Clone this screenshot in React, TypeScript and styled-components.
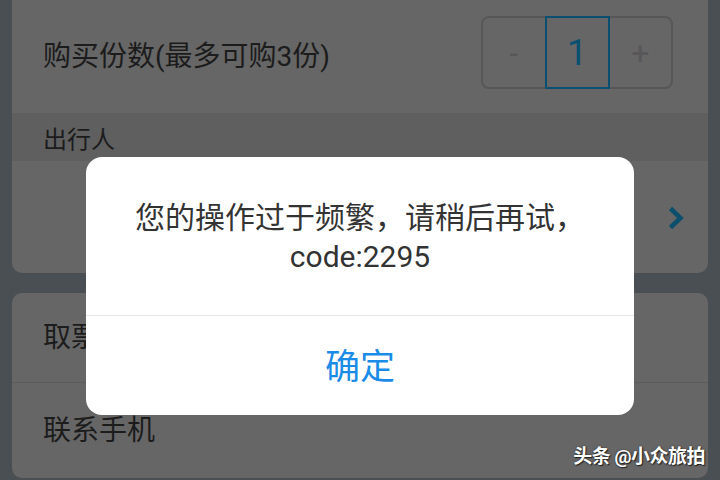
import React from "react";
import styled, { createGlobalStyle } from "styled-components";

const Global = createGlobalStyle`
  html, body { margin: 0; padding: 0; width: 720px; height: 480px; overflow: hidden; }
  body { background: #4a4f53; font-family: Roboto, "Noto Sans CJK SC", sans-serif; }
`;

const Page = styled.div`
  position: relative;
  width: 720px;
  height: 480px;
  overflow: hidden;
  background: #4a4f53;
  padding: 0 12px;
  box-sizing: border-box;
  display: flex;
  flex-direction: column;
  gap: 20px;
`;

const Card = styled.div<{ $top?: boolean }>`
  background: #666666;
  border-radius: ${(p) => (p.$top ? "0 0 10px 10px" : "10px")};
  display: flex;
  flex-direction: column;
  overflow: hidden;
  flex-shrink: 0;
`;

const Row = styled.div<{ $h: number; $divider?: boolean }>`
  height: ${(p) => p.$h}px;
  padding: 0 35px 0 31px;
  display: flex;
  align-items: center;
  justify-content: space-between;
  box-sizing: border-box;
  border-bottom: ${(p) => (p.$divider ? "1px solid #5c5c5c" : "none")};
`;

const Label = styled.span`
  font-size: 28px;
  color: #1c1c1c;
  line-height: 1;
`;

const SectionHeader = styled.div`
  height: 48px;
  background: #5f5f5f;
  padding: 0 31px;
  display: flex;
  align-items: center;
  font-size: 24px;
  color: #1c1c1c;
`;

const Stepper = styled.div`
  display: flex;
  width: 192px;
  height: 73px;
  border: 2px solid #575757;
  border-radius: 8px;
  box-sizing: border-box;
  margin-top: -8px;
`;

const StepBtn = styled.div`
  flex: 1;
  display: flex;
  align-items: center;
  justify-content: center;
  font-size: 32px;
  color: #575757;
`;

const StepValue = styled.div`
  width: 65px;
  margin: -2px 0;
  border: 2px solid #0b4f70;
  box-sizing: border-box;
  display: flex;
  align-items: center;
  justify-content: center;
  font-size: 36px;
  color: #0b4f70;
`;

const Chevron = styled.svg`
  width: 18px;
  height: 26px;
  margin-right: -12px;
  margin-top: 2px;
`;

const Dialog = styled.div`
  position: absolute;
  left: 86px;
  top: 157px;
  width: 548px;
  height: 258px;
  background: #ffffff;
  border-radius: 16px;
  display: flex;
  flex-direction: column;
  overflow: hidden;
`;

const Message = styled.div`
  height: 159px;
  border-bottom: 1px solid #e6e6e6;
  display: flex;
  align-items: center;
  justify-content: center;
  text-align: center;
  font-size: 30px;
  line-height: 39px;
  color: #333333;
  padding-top: 2px;
  box-sizing: border-box;
`;

const Confirm = styled.div`
  flex: 1;
  display: flex;
  align-items: center;
  justify-content: center;
  font-size: 35px;
  color: #1a8be6;
  padding-bottom: 4px;
`;

const Watermark = styled.div`
  position: absolute;
  right: 15px;
  bottom: 12px;
  font-size: 19px;
  font-weight: 700;
  color: #ffffff;
  text-shadow: 1px 1px 1px #222, 0 0 2px #333;
  letter-spacing: -0.5px;
`;

export default function App() {
  return (
    <>
      <Global />
      <Page>
        <Card $top>
          <Row $h={113}>
            <Label>购买份数(最多可购3份)</Label>
            <Stepper>
              <StepBtn>-</StepBtn>
              <StepValue>1</StepValue>
              <StepBtn>+</StepBtn>
            </Stepper>
          </Row>
          <SectionHeader>出行人</SectionHeader>
          <Row $h={112}>
            <span />
            <Chevron viewBox="0 0 18 26">
              <path d="M3.5 3.5 L13.5 13 L3.5 22.5" fill="none" stroke="#0b4f6c" strokeWidth="4.5" />
            </Chevron>
          </Row>
        </Card>
        <Card>
          <Row $h={90} $divider>
            <Label>取票人</Label>
          </Row>
          <Row $h={95}>
            <Label>联系手机</Label>
          </Row>
        </Card>
        <Dialog>
          <Message>
            您的操作过于频繁，请稍后再试，
            <br />
            code:2295
          </Message>
          <Confirm>确定</Confirm>
        </Dialog>
        <Watermark>头条 @小众旅拍</Watermark>
      </Page>
    </>
  );
}
